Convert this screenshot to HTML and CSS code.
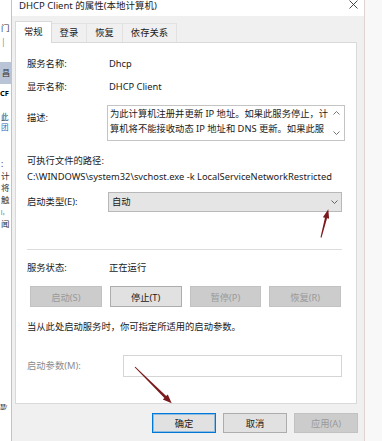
FILE: index.html
```html
<!DOCTYPE html>
<html lang="zh-CN">
<head>
<meta charset="utf-8">
<title>DHCP Client 的属性</title>
<link rel="stylesheet" href="styles.css">
</head>
<body>
<div class="screen">
  <div class="behind">
    <span class="b b-first">门</span>
    <span class="b b-bar">|</span>
    <span class="b-sel"><span class="b-sel-glyph">昌</span></span>
    <span class="b b-cf">CF</span>
    <span class="b b-tight b-gap13">此</span>
    <span class="b b-tight b-blue">团</span>
    <span class="b b-gap26">:</span>
    <span class="b">计</span>
    <span class="b">将</span>
    <span class="b">触</span>
    <span class="b b-narrow">|，</span>
    <span class="b">闻</span>
    <span class="b b-bottom b-narrow">瑟/</span>
  </div>

  <div class="dialog">
    <div class="titlebar">
      <span class="title">DHCP Client 的属性(本地计算机)</span>
      <svg class="close" viewBox="0 0 9 9" width="9" height="9"><path d="M0.5 0.5 L8.5 8.5 M8.5 0.5 L0.5 8.5" stroke="#333" stroke-width="0.9" fill="none"/></svg>
    </div>

    <div class="tabs">
      <div class="tab active">常规</div>
      <div class="tab">登录</div>
      <div class="tab">恢复</div>
      <div class="tab">依存关系</div>
    </div>

    <div class="panel">
      <div class="row r-name"><span class="label">服务名称:</span><span class="value">Dhcp</span></div>
      <div class="row r-display"><span class="label">显示名称:</span><span class="value">DHCP Client</span></div>
      <div class="row r-desc">
        <span class="label label-desc">描述:</span>
        <div class="textarea">
          <div class="ta-text">为此计算机注册并更新 IP 地址。如果此服务停止，计<br>算机将不能接收动态 IP 地址和 DNS 更新。如果此服</div>
          <div class="ta-scroll">
            <svg width="7" height="4" viewBox="0 0 7 4"><path d="M0.5 3.5 L3.5 0.5 L6.5 3.5" stroke="#666" stroke-width="0.9" fill="none"/></svg>
            <svg width="7" height="4" viewBox="0 0 7 4"><path d="M0.5 0.5 L3.5 3.5 L6.5 0.5" stroke="#666" stroke-width="0.9" fill="none"/></svg>
          </div>
        </div>
      </div>
      <div class="path-label">可执行文件的路径:</div>
      <div class="path">C:\WINDOWS\system32\svchost.exe -k LocalServiceNetworkRestricted</div>
      <div class="row r-startup">
        <span class="label">启动类型(E):</span>
        <div class="combo"><span>自动</span><svg width="7" height="4" viewBox="0 0 7 4"><path d="M0.5 0.5 L3.5 3.5 L6.5 0.5" stroke="#555" stroke-width="0.9" fill="none"/></svg></div>
      </div>
      <div class="sep"></div>
      <div class="row r-status"><span class="label">服务状态:</span><span class="value">正在运行</span></div>
      <div class="svc-buttons">
        <button class="btn disabled">启动(S)</button>
        <button class="btn">停止(T)</button>
        <button class="btn disabled">暂停(P)</button>
        <button class="btn disabled">恢复(R)</button>
      </div>
      <div class="note">当从此处启动服务时，你可指定所适用的启动参数。</div>
      <div class="row r-params">
        <span class="label label-wide disabled-text">启动参数(M):</span>
        <div class="input"></div>
      </div>
    </div>

    <div class="footer">
      <button class="btn primary">确定</button>
      <button class="btn">取消</button>
      <button class="btn disabled">应用(A)</button>
    </div>
  </div>

  <div class="right"></div>
</div>

<svg class="annot" width="382" height="441" viewBox="0 0 382 441">
  <polygon points="321.48,237.63 327.07,218.28 329.1,218.8 328.3,209.3 322.9,217.2 324.93,217.72 320.52,237.37" fill="#7a1a1c"/>
  <polygon points="135.35,366.65 166.2,396.1 167.8,394.5 171.7,403.3 162.8,399.5 164.4,397.9 134.65,367.35" fill="#7a1a1c"/>
</svg>
</body>
</html>
```

FILE: styles.css
```css
* { box-sizing: border-box; margin: 0; padding: 0; }
html, body { width: 382px; height: 441px; overflow: hidden; background: #fff; }
body {
  font-family: "Noto Sans", "Noto Sans CJK SC", sans-serif;
  font-size: 9.3px;
  color: #1a1a1a;
  position: relative;
}
.screen { display: flex; height: 441px; }

/* window behind the dialog */
.behind {
  width: 11px; flex: none; overflow: hidden; background: #fff;
  display: flex; flex-direction: column;
  font-size: 8.5px; color: #333; white-space: nowrap;
}
.b { display: block; height: 12px; line-height: 12px; padding-left: 1px; }
.b-first { margin-top: 22px; }
.b-bar { margin-top: 2px; color: #888; }
.b-sel { display: block; margin-top: 14px; height: 22px; background: #b9c4d6; line-height: 22px; padding-left: 2px; color: #333; font-size: 8px; }
.b-cf { margin-top: 3px; font-weight: bold; color: #000; font-size: 7.5px; padding-left: 0; }
.b-tight { height: 10px; line-height: 10px; font-size: 7.5px; }
.b-gap13 { margin-top: 13px; }
.b-blue { color: #2a62b8; }
.b-gap26 { margin-top: 26px; }
.b-bottom { margin-top: 171px; }
.b-narrow { padding-left: 0; font-size: 6px; letter-spacing: -1px; }

.dialog {
  width: 354px; flex: none; background: #f0f0f0;
  border-left: 1px solid #cdbfbf; border-right: 1px solid #dfd3d3;
  display: flex; flex-direction: column;
}
.right { flex: 1; background: #f8f8f8; }

.titlebar {
  height: 16px; background: #fff;
  display: flex; justify-content: space-between; align-items: flex-start;
  padding: 0 6px 0 7px;
}
.title { line-height: 12px; font-size: 9.5px; color: #222; }
.close { display: block; }

.tabs {
  display: flex; align-items: flex-end; height: 22px;
  margin: 5px 0 -1px 3px; position: relative; z-index: 1;
}
.tab {
  height: 19px; margin-bottom: 1px; padding: 0 8px; line-height: 17px;
  border-top: 1px solid #e2e2e2; border-right: 1px solid #e2e2e2;
  color: #1a1a1a;
}
.tab.active {
  height: 22px; margin-bottom: 0; padding-top: 3px; line-height: 14px;
  background: #fff; border: 1px solid #d9d9d9; border-bottom: none;
}

.panel {
  margin: 0 7px 0 3px; background: #fff; border: 1px solid #d9d9d9;
  padding: 0 14px 26px 11px; display: flex; flex-direction: column;
}
.row { display: flex; align-items: center; line-height: 14px; }
.label { width: 81px; flex: none; }
.label-wide { width: 96px; }
.value { padding-left: 1px; }
.disabled-text { color: #8c8c8c; }

.r-name { margin-top: 14px; }
.r-display { margin-top: 9px; }
.r-desc { margin-top: 11px; align-items: flex-start; }
.label-desc { padding-top: 6px; }
.textarea {
  flex: 1; height: 36px; margin-left: -1px;
  border: 1px solid #c4c4c4; display: flex;
}
.ta-text { flex: 1; padding-left: 2px; line-height: 15px; overflow: hidden; white-space: nowrap; }
.ta-scroll {
  width: 16px; flex: none; display: flex; flex-direction: column;
  justify-content: space-between; align-items: center; padding: 5px 0;
}
.ta-scroll svg { display: block; }

.path-label { margin-top: 13px; line-height: 14px; }
.path { margin-top: 2px; line-height: 14px; white-space: nowrap; }

.r-startup { margin-top: 8px; }
.combo {
  flex: 1; height: 20px; background: #e5e5e5; border: 1px solid #b8b8b8;
  display: flex; align-items: center; justify-content: space-between;
  padding: 0 3px 0 3px;
}
.combo svg { display: block; }

.sep { margin-top: 37px; height: 1px; background: #dcdcdc; }
.r-status { margin-top: 11px; }

.svc-buttons {
  display: grid; grid-template-columns: repeat(4, 1fr); gap: 8px;
  margin: 11px 1px 0 3px;
}
.btn {
  height: 21px; font: inherit; color: #1a1a1a;
  background: #e1e1e1; border: 1px solid #adadad;
}
.btn.disabled { background: #cccccc; border-color: #c2c2c2; color: #9a9a9a; }
.btn.primary { border-color: #0078d7; box-shadow: inset 0 0 0 1px rgba(0, 120, 215, 0.35); }

.note { margin-top: 13px; line-height: 14px; }
.r-params { margin-top: 21px; }
.input { flex: 1; height: 22px; border: 1px solid #d5d5d5; background: #fff; }

.footer {
  display: flex; justify-content: flex-end; gap: 7px;
  margin-top: 9px; padding-right: 6px;
}
.footer .btn { width: 64px; height: 20px; }

.annot { position: absolute; left: 0; top: 0; pointer-events: none; }
```
